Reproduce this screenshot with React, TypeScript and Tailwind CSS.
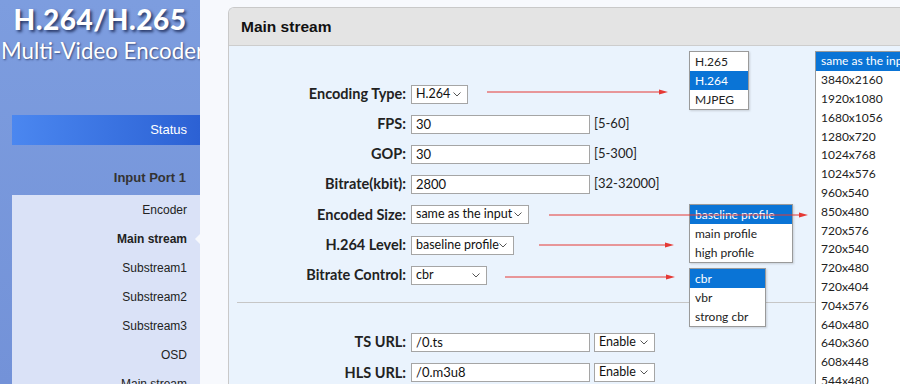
import React from "react";

const Chevron = () => (
  <svg width="8" height="5" viewBox="0 0 8 5" className="shrink-0">
    <polyline points="0.5,0.5 4,4 7.5,0.5" fill="none" stroke="#555" strokeWidth="1" />
  </svg>
);

function Select({ value, w }: { value: string; w: string }) {
  return (
    <div className={`${w} h-[19px] border border-[#a5a5a5] bg-white flex items-center justify-between pl-[4px] pr-[6px] text-[12.5px] text-[#111] leading-none`}>
      <span className="whitespace-nowrap">{value}</span>
      <Chevron />
    </div>
  );
}

function Input({ value, w = "w-[179px]" }: { value: string; w?: string }) {
  return (
    <div className={`${w} h-[19px] border border-[#a5a5a5] bg-white flex items-center pl-[4px] text-[13px] text-[#111] leading-none`}>
      {value}
    </div>
  );
}

function Row({ label, children, h = "h-[30px]" }: { label: string; children: React.ReactNode; h?: string }) {
  return (
    <div className={`flex items-center ${h}`}>
      <div className="w-[182px] shrink-0 text-right pr-[5px] font-bold text-[14.5px] text-[#222] whitespace-nowrap">{label}</div>
      <div className="flex items-center gap-[4px]">{children}</div>
    </div>
  );
}

function Menu({ items, sel, cls }: { items: string[]; sel: number; cls: string }) {
  return (
    <div className={`absolute ${cls} bg-white border border-[#9a9a9a] shadow-[1px_1px_2px_rgba(0,0,0,0.15)] text-[12px] text-[#222]`}>
      {items.map((it, i) => (
        <div
          key={it}
          className={`h-[19px] flex items-center pl-[5px] pr-[4px] whitespace-nowrap ${i === sel ? "bg-[#0a74d6] text-white" : ""}`}
        >
          {it}
        </div>
      ))}
    </div>
  );
}

const sizes = [
  "same as the input",
  "3840x2160",
  "1920x1080",
  "1680x1056",
  "1280x720",
  "1024x768",
  "1024x576",
  "960x540",
  "850x480",
  "720x576",
  "720x540",
  "720x480",
  "720x404",
  "704x576",
  "640x480",
  "640x360",
  "608x448",
  "544x480",
];

function Arrow({ x1, x2, y }: { x1: number; x2: number; y: number }) {
  return (
    <g>
      <line x1={x1} y1={y} x2={x2 - 6} y2={y} stroke="#e53935" strokeWidth="1" />
      <polygon points={`${x2 - 9},${y - 2.5} ${x2},${y} ${x2 - 9},${y + 2.5}`} fill="#e53935" />
    </g>
  );
}

export default function App() {
  return (
    <div
      className="relative w-[900px] h-[384px] overflow-hidden flex bg-[#f7f9fd]"
      style={{ fontFamily: "Lato, 'Liberation Sans', sans-serif" }}
    >
      {/* Sidebar */}
      <aside className="w-[200px] shrink-0 h-full bg-gradient-to-b from-[#7d9ddf] to-[#7392d8] overflow-hidden flex flex-col">
        <div className="shrink-0 flex justify-center pt-[1px] h-[36px]">
          <span
            className="whitespace-nowrap text-white font-black text-[28px] leading-[36px] tracking-[0.5px]"
            style={{ textShadow: "2px 2px 3px rgba(10,20,60,0.75)" }}
          >
            H.264/H.265
          </span>
        </div>
        <div className="shrink-0 flex justify-start h-[30px] pl-[1px]">
          <span
            className="whitespace-nowrap text-white text-[22.3px] leading-[30px]"
            style={{ textShadow: "1px 1px 2px rgba(10,20,60,0.6)" }}
          >
            Multi-Video Encoder
          </span>
        </div>
        <div
          className="shrink-0 ml-[12px] mt-[49px] h-[30px] bg-gradient-to-r from-[#4b87f0] to-[#2c61d4] flex items-center justify-end pr-[13px] text-white text-[13px]"
          style={{ fontFamily: "'Liberation Sans', Arial, sans-serif" }}
        >
          Status
        </div>
        <div
          className="shrink-0 h-[50px] flex items-end justify-end pr-[14px] pb-[8px] font-bold text-[13px] text-[#333]"
          style={{ fontFamily: "'Liberation Sans', Arial, sans-serif" }}
        >
          Input Port 1
        </div>
        <div
          className="shrink-0 ml-[12px] bg-[#dae2f7] text-[12px] text-[#222]"
          style={{ fontFamily: "'Liberation Sans', Arial, sans-serif" }}
        >
          {["Encoder", "Main stream", "Substream1", "Substream2", "Substream3", "OSD", "Main stream"].map((t, i) => (
            <div key={i} className="relative h-[29px] flex items-center justify-end pr-[13px]">
              <span className={i === 1 ? "font-bold" : ""}>{t}</span>
              {i === 1 && (
                <span className="absolute right-0 top-1/2 -translate-y-1/2 w-0 h-0 border-y-[5px] border-y-transparent border-r-[5px] border-r-[#f7f9fd]" />
              )}
            </div>
          ))}
        </div>
      </aside>

      {/* Main */}
      <main className="flex-1 pl-[28px] pt-[7px]">
        <div className="h-[400px] rounded-tl-[6px] border-l border-t border-[#c9c9c9] overflow-hidden bg-[#eaf3fd]">
          <div
            className="h-[38px] bg-[#e4e4e4] border-b border-[#cdcdcd] flex items-center pl-[12px] font-bold text-[15.5px] text-[#111]"
            style={{ fontFamily: "'Liberation Sans', Arial, sans-serif" }}
          >
            Main stream
          </div>
          <div className="pt-[33px]">
            <Row label="Encoding Type:">
              <Select value="H.264" w="w-[57px]" />
            </Row>
            <Row label="FPS:">
              <Input value="30" />
              <span className="text-[13px] text-[#222]">[5-60]</span>
            </Row>
            <Row label="GOP:">
              <Input value="30" />
              <span className="text-[13px] text-[#222]">[5-300]</span>
            </Row>
            <Row label="Bitrate(kbit):">
              <Input value="2800" />
              <span className="text-[13px] text-[#222]">[32-32000]</span>
            </Row>
            <Row label="Encoded Size:" h="h-[31px]">
              <Select value="same as the input" w="w-[118px]" />
            </Row>
            <Row label="H.264 Level:">
              <Select value="baseline profile" w="w-[103px]" />
            </Row>
            <Row label="Bitrate Control:">
              <Select value="cbr" w="w-[76px]" />
            </Row>
            <div className="ml-[8px] mt-[12px] border-t border-[#c6c6c6]" />
            <div className="pt-[24px]">
              <Row label="TS URL:">
                <Input value="/0.ts" />
                <Select value="Enable" w="w-[61px]" />
              </Row>
              <Row label="HLS URL:" h="h-[31px]">
                <Input value="/0.m3u8" />
                <Select value="Enable" w="w-[61px]" />
              </Row>
            </div>
          </div>
        </div>
      </main>

      {/* Dropdown overlays */}
      <Menu items={["H.265", "H.264", "MJPEG"]} sel={1} cls="left-[689px] top-[51px] w-[60px]" />
      <Menu items={["baseline profile", "main profile", "high profile"]} sel={0} cls="left-[689px] top-[204px] w-[104px]" />
      <Menu items={["cbr", "vbr", "strong cbr"]} sel={0} cls="left-[689px] top-[268px] w-[77px]" />
      <div className="absolute left-[815px] top-[51px] w-[100px] h-[340px] bg-white border-l border-t border-[#9a9a9a] text-[12px] text-[#222]">
        {sizes.map((s, i) => (
          <div
            key={s}
            className={`h-[18.8px] flex items-center pl-[5px] whitespace-nowrap ${i === 0 ? "bg-[#0a74d6] text-white" : ""}`}
          >
            {s}
          </div>
        ))}
      </div>

      {/* Annotation arrows */}
      <svg className="absolute inset-0 pointer-events-none" width="900" height="384">
        <Arrow x1={487} x2={668} y={92} />
        <Arrow x1={549} x2={808} y={215} />
        <Arrow x1={539} x2={674} y={245} />
        <Arrow x1={505} x2={675} y={277} />
      </svg>
    </div>
  );
}
